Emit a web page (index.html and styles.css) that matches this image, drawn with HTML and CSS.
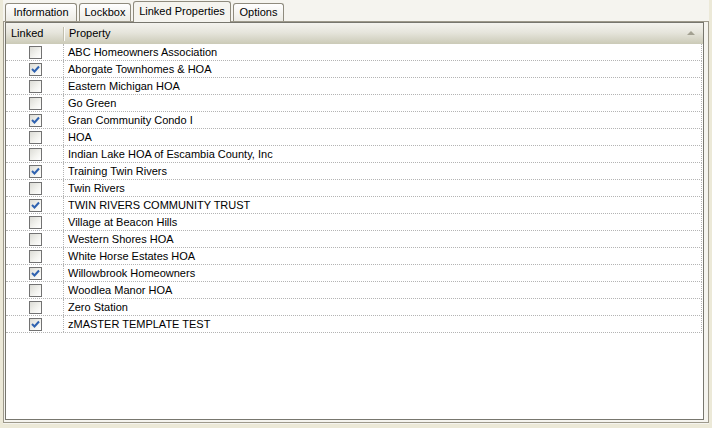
FILE: index.html
```html
<!DOCTYPE html>
<html>
<head>
<meta charset="utf-8">
<link rel="stylesheet" href="styles.css">
</head>
<body>
<div class="frame">
  <div class="tabs">
    <div class="tab tab-info">Information</div>
    <div class="tab tab-lock">Lockbox</div>
    <div class="tab tab-linked active">Linked Properties</div>
    <div class="tab tab-opt">Options</div>
  </div>
  <div class="panel">
    <div class="listview">
      <div class="header">
        <div class="hcell hlinked">Linked</div>
        <div class="hdiv"></div>
        <div class="hcell hprop">Property<span class="sort"></span></div>
      </div>
      <div class="rows">
        <div class="row"><div class="cell-check"><span class="cb"></span></div><div class="cell-prop">ABC Homeowners Association</div></div>
        <div class="row"><div class="cell-check"><span class="cb on"><svg viewBox="0 0 11 11" width="11" height="11"><polyline points="2,5 4.5,7.5 9,2.5" /></svg></span></div><div class="cell-prop">Aborgate Townhomes &amp; HOA</div></div>
        <div class="row"><div class="cell-check"><span class="cb"></span></div><div class="cell-prop">Eastern Michigan HOA</div></div>
        <div class="row"><div class="cell-check"><span class="cb"></span></div><div class="cell-prop">Go Green</div></div>
        <div class="row"><div class="cell-check"><span class="cb on"><svg viewBox="0 0 11 11" width="11" height="11"><polyline points="2,5 4.5,7.5 9,2.5" /></svg></span></div><div class="cell-prop">Gran Community Condo I</div></div>
        <div class="row"><div class="cell-check"><span class="cb"></span></div><div class="cell-prop">HOA</div></div>
        <div class="row"><div class="cell-check"><span class="cb"></span></div><div class="cell-prop">Indian Lake HOA of Escambia County, Inc</div></div>
        <div class="row"><div class="cell-check"><span class="cb on"><svg viewBox="0 0 11 11" width="11" height="11"><polyline points="2,5 4.5,7.5 9,2.5" /></svg></span></div><div class="cell-prop">Training Twin Rivers</div></div>
        <div class="row"><div class="cell-check"><span class="cb"></span></div><div class="cell-prop">Twin Rivers</div></div>
        <div class="row"><div class="cell-check"><span class="cb on"><svg viewBox="0 0 11 11" width="11" height="11"><polyline points="2,5 4.5,7.5 9,2.5" /></svg></span></div><div class="cell-prop">TWIN RIVERS COMMUNITY TRUST</div></div>
        <div class="row"><div class="cell-check"><span class="cb"></span></div><div class="cell-prop">Village at Beacon Hills</div></div>
        <div class="row"><div class="cell-check"><span class="cb"></span></div><div class="cell-prop">Western Shores HOA</div></div>
        <div class="row"><div class="cell-check"><span class="cb"></span></div><div class="cell-prop">White Horse Estates HOA</div></div>
        <div class="row"><div class="cell-check"><span class="cb on"><svg viewBox="0 0 11 11" width="11" height="11"><polyline points="2,5 4.5,7.5 9,2.5" /></svg></span></div><div class="cell-prop">Willowbrook Homeowners</div></div>
        <div class="row"><div class="cell-check"><span class="cb"></span></div><div class="cell-prop">Woodlea Manor HOA</div></div>
        <div class="row"><div class="cell-check"><span class="cb"></span></div><div class="cell-prop">Zero Station</div></div>
        <div class="row"><div class="cell-check"><span class="cb on"><svg viewBox="0 0 11 11" width="11" height="11"><polyline points="2,5 4.5,7.5 9,2.5" /></svg></span></div><div class="cell-prop">zMASTER TEMPLATE TEST</div></div>
      </div>
    </div>
  </div>
</div>
</body>
</html>
```
FILE: styles.css
```css
html, body {
  margin: 0;
  padding: 0;
}
body {
  width: 712px;
  height: 428px;
  background: #ece9d8;
  font-family: "Liberation Sans", Arial, sans-serif;
  font-size: 11px;
  color: #000;
  overflow: hidden;
}
.frame {
  margin: 0 3px 0 3px;
  width: 706px;
  height: 424px;
  background: #f5f4ef;
  display: flex;
  flex-direction: column;
}
.tabs {
  height: 21px;
  display: flex;
  align-items: flex-end;
  padding-left: 2px;
  gap: 2px;
  position: relative;
  z-index: 2;
}
.tab {
  box-sizing: border-box;
  height: 18px;
  border: 1px solid #8f8b7e;
  border-bottom: none;
  border-radius: 3px 3px 0 0;
  background: linear-gradient(#ffffff, #ecebe5);
  text-align: center;
  line-height: 17px;
  font-size: 11px;
  color: #000;
}
.tab-info { width: 72px; }
.tab-lock { width: 52px; }
.tab-linked { width: 98px; }
.tab-opt { width: 51px; }
.tab.active {
  height: 21px;
  margin-bottom: -1px;
  background: #f5f4ef;
  line-height: 19px;
}
.panel {
  box-sizing: border-box;
  width: 706px;
  height: 402px;
  border: 1px solid #9d998b;
  padding: 0 4px 2px 1px;
  display: flex;
}
.listview {
  flex: 1;
  border: 1px solid #77766e;
  background: #fff;
  display: flex;
  flex-direction: column;
}
.header {
  height: 21px;
  display: flex;
  align-items: center;
  background: linear-gradient(#f4f3ee 0%, #e6e5dc 45%, #cbcab7 100%);
  position: relative;
}
.hcell {
  line-height: 21px;
}
.hlinked {
  width: 52px;
  padding-left: 5px;
}
.hdiv {
  width: 1px;
  height: 14px;
  background: #c2bfae;
  border-right: 1px solid #fbfbf8;
}
.hprop {
  flex: 1;
  padding-left: 4px;
  position: relative;
}
.sort {
  position: absolute;
  right: 8px;
  top: 8px;
  width: 0;
  height: 0;
  border-left: 4px solid transparent;
  border-right: 4px solid transparent;
  border-bottom: 4px solid #a3a192;
}
.rows {
  width: 696px;
  display: flex;
  flex-direction: column;
}
.row {
  height: 16px;
  display: flex;
  border-bottom: 1px dotted #b4b4b4;
  border-right: 1px dotted #b4b4b4;
}
.cell-check {
  width: 56px;
  border-right: 1px dotted #b4b4b4;
  display: flex;
  align-items: center;
  justify-content: center;
  padding-left: 1px;
}
.cell-prop {
  flex: 1;
  padding-left: 4px;
  line-height: 16px;
  white-space: nowrap;
}
.cb {
  box-sizing: border-box;
  width: 13px;
  height: 13px;
  border: 1px solid #727272;
  background: linear-gradient(135deg, #dcdcd6 0%, #f4f4f0 60%, #ffffff 100%);
  display: flex;
  align-items: center;
  justify-content: center;
}
.cb svg polyline {
  fill: none;
  stroke: #2f62b0;
  stroke-width: 2;
}
```
